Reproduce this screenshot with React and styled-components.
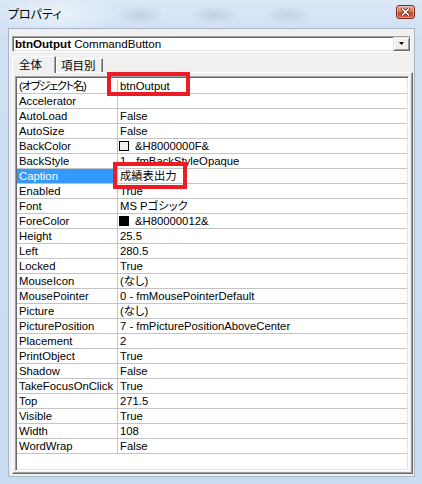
import React from 'react';
import styled, { createGlobalStyle } from 'styled-components';

const Global = createGlobalStyle`
  html, body { margin: 0; padding: 0; }
  body {
    width: 422px;
    height: 484px;
    overflow: hidden;
    font-family: "Liberation Sans", "Noto Sans CJK JP", sans-serif;
    font-feature-settings: "palt";
  }
`;

const Window = styled.div`
  position: relative;
  width: 422px;
  height: 484px;
  box-sizing: border-box;
  padding: 0 7px 7px 8px;
  display: flex;
  flex-direction: column;
  background:
    radial-gradient(ellipse 24px 10px at 140px 15px, rgba(80, 100, 130, 0.16), transparent),
    radial-gradient(ellipse 24px 10px at 215px 15px, rgba(80, 100, 130, 0.16), transparent),
    radial-gradient(ellipse 24px 10px at 288px 15px, rgba(80, 100, 130, 0.14), transparent),
    radial-gradient(ellipse 60px 20px at 60px 14px, rgba(255, 255, 255, 0.5), transparent),
    linear-gradient(#dbe8f6, #cfe0f3 40px, #c9dcf1);
`;

const TitleBar = styled.div`
  height: 28px;
  flex: none;
  display: flex;
  justify-content: space-between;
  align-items: flex-start;
`;

const TitleText = styled.div`
  margin-top: 7px;
  font-family: "Noto Sans CJK JP", sans-serif;
  font-size: 12px;
  line-height: 14px;
  color: #000;
`;

const CloseButton = styled.div`
  margin-top: 5px;
  width: 19px;
  height: 14px;
  box-sizing: border-box;
  border: 1px solid #7a2a1c;
  border-radius: 3px;
  background: linear-gradient(#eaa998, #d9775f 45%, #c54a30 55%, #d0634a);
  box-shadow: inset 0 0 0 1px rgba(255, 220, 210, 0.45);
  display: flex;
  align-items: center;
  justify-content: center;
`;

const Client = styled.div`
  flex: 1;
  display: flex;
  flex-direction: column;
  background: #f0f0f0;
  border: 1px solid #a8b7c8;
  padding: 7px 1px 2px 3px;
  min-height: 0;
`;

const Combo = styled.div`
  height: 16px;
  flex: none;
  margin-right: 2px;
  box-sizing: border-box;
  display: flex;
  background: #fff;
  border-top: 1px solid #a0a0a0;
  border-left: 1px solid #a0a0a0;
  border-bottom: 1px solid #fff;
  border-right: 1px solid #fff;
  box-shadow: inset 1px 1px #696969, inset -1px -1px #e3e3e3;
`;

const ComboText = styled.div`
  flex: 1;
  padding-left: 2px;
  font-size: 11.6px;
  line-height: 14px;
  color: #000;
  white-space: nowrap;
  b { font-weight: bold; }
`;

const DropButton = styled.div`
  width: 17px;
  height: 14px;
  box-sizing: border-box;
  background: #f0f0f0;
  border-top: 1px solid #e3e3e3;
  border-left: 1px solid #e3e3e3;
  border-right: 1px solid #696969;
  border-bottom: 1px solid #696969;
  box-shadow: inset 1px 1px #fff, inset -1px -1px #a0a0a0;
  display: flex;
  align-items: center;
  justify-content: center;
`;

const TabRow = styled.div`
  margin-top: 4px;
  height: 16px;
  flex: none;
  display: flex;
  align-items: flex-end;
  position: relative;
  z-index: 1;
`;

const Tab = styled.div`
  box-sizing: border-box;
  width: ${p => (p.$selected ? 44 : 47)}px;
  height: ${p => (p.$selected ? 17 : 14)}px;
  margin-bottom: ${p => (p.$selected ? -1 : 0)}px;
  padding-left: ${p => (p.$selected ? 6 : 4)}px;
  padding-top: ${p => (p.$selected ? 1 : 0)}px;
  background: #f0f0f0;
  border-top: 1px solid #fff;
  border-left: 1px solid #fff;
  border-right: 1px solid #696969;
  box-shadow: inset -1px 0 #a0a0a0;
  font-family: "Noto Sans CJK JP", sans-serif;
  font-size: 11.5px;
  line-height: 13px;
  color: #000;
`;

const Panel = styled.div`
  flex: 1;
  min-height: 0;
  display: flex;
  background: #f0f0f0;
  border-top: 1px solid #fff;
  border-left: 1px solid #fff;
  border-right: 1px solid #696969;
  border-bottom: 1px solid #696969;
  box-shadow: inset -1px -1px #a0a0a0;
  padding: 3px 3px 2px 2px;
`;

const Grid = styled.div`
  flex: 1;
  background: #fff;
  border-top: 1px solid #a0a0a0;
  border-left: 1px solid #a0a0a0;
  border-bottom: 1px solid #fff;
  border-right: 1px solid #fff;
  box-shadow: inset 1px 1px #696969, inset -1px -1px #e3e3e3;
  padding: 2px 1px 1px 1px;
`;

const Row = styled.div`
  display: grid;
  grid-template-columns: 101px 1fr;
  height: 15px;
  box-sizing: border-box;
  border-bottom: 1px solid #c4c4c4;
  font-size: 11.3px;
  line-height: 14px;
  color: #000;
  white-space: nowrap;
`;

const Label = styled.div`
  padding-left: 2px;
  border-right: 1px solid #c4c4c4;
  background: ${p => (p.$selected ? '#3399ff' : 'transparent')};
  color: ${p => (p.$selected ? '#fff' : '#000')};
  letter-spacing: ${p => (p.$tight ? '-1.3px' : 'normal')};
  overflow: hidden;
`;

const Value = styled.div`
  padding-left: 2px;
  display: flex;
  align-items: center;
  overflow: hidden;
`;

const Swatch = styled.span`
  width: 10px;
  height: 10px;
  box-sizing: border-box;
  margin-left: -1px;
  margin-right: 6px;
  border: 1px solid #000;
  background: ${p => p.$color};
  flex: none;
`;

const RedBox = styled.div`
  position: absolute;
  left: ${p => p.$x}px;
  top: ${p => p.$y}px;
  width: ${p => p.$w}px;
  height: ${p => p.$h}px;
  box-sizing: border-box;
  border: 4px solid #ed1c24;
  pointer-events: none;
`;

const rows = [
  ['(オブジェクト名)', 'btnOutput'],
  ['Accelerator', ''],
  ['AutoLoad', 'False'],
  ['AutoSize', 'False'],
  ['BackColor', '&H8000000F&', '#f0f0f0'],
  ['BackStyle', '1 - fmBackStyleOpaque'],
  ['Caption', '成績表出力'],
  ['Enabled', 'True'],
  ['Font', 'MS Pゴシック'],
  ['ForeColor', '&H80000012&', '#000'],
  ['Height', '25.5'],
  ['Left', '280.5'],
  ['Locked', 'True'],
  ['MouseIcon', '(なし)'],
  ['MousePointer', '0 - fmMousePointerDefault'],
  ['Picture', '(なし)'],
  ['PicturePosition', '7 - fmPicturePositionAboveCenter'],
  ['Placement', '2'],
  ['PrintObject', 'True'],
  ['Shadow', 'False'],
  ['TakeFocusOnClick', 'True'],
  ['Top', '271.5'],
  ['Visible', 'True'],
  ['Width', '108'],
  ['WordWrap', 'False'],
];

export default function App() {
  return (
    <>
      <Global />
      <Window>
        <TitleBar>
          <TitleText>プロパティ</TitleText>
          <CloseButton>
            <svg width="9" height="8" viewBox="0 0 9 8">
              <path d="M1.5 1 L7.5 7 M7.5 1 L1.5 7" stroke="#5a1a10" strokeWidth="3" strokeLinecap="square" />
              <path d="M1.5 1 L7.5 7 M7.5 1 L1.5 7" stroke="#fff" strokeWidth="1.6" strokeLinecap="square" />
            </svg>
          </CloseButton>
        </TitleBar>
        <Client>
          <Combo>
            <ComboText><b>btnOutput</b> CommandButton</ComboText>
            <DropButton>
              <svg width="7" height="4" viewBox="0 0 7 4">
                <path d="M1 0 H6 L3.5 3 Z" fill="#000" />
              </svg>
            </DropButton>
          </Combo>
          <TabRow>
            <Tab $selected>全体</Tab>
            <Tab>項目別</Tab>
          </TabRow>
          <Panel>
            <Grid>
              {rows.map(([name, val, color]) => (
                <Row key={name}>
                  <Label $selected={name === 'Caption'} $tight={name.startsWith('(')}>{name}</Label>
                  <Value>
                    {color && <Swatch $color={color} />}
                    {val}
                  </Value>
                </Row>
              ))}
            </Grid>
          </Panel>
        </Client>
        <RedBox $x={107} $y={72} $w={83} $h={24} />
        <RedBox $x={113} $y={162} $w={74} $h={27} />
      </Window>
    </>
  );
}
